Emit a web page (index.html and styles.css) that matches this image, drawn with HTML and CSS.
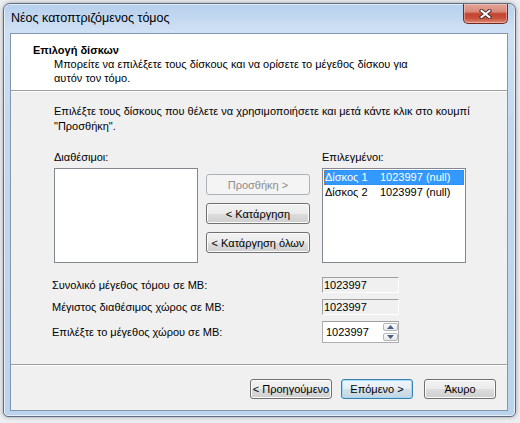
FILE: index.html
```html
<!DOCTYPE html>
<html lang="el">
<head>
<meta charset="utf-8">
<title>Νέος κατοπτριζόμενος τόμος</title>
<link rel="stylesheet" href="styles.css">
</head>
<body>
<div class="window">
  <div class="titlebar">
    <span class="title">Νέος κατοπτριζόμενος τόμος</span>
    <div class="close">
      <svg width="13" height="10" viewBox="0 0 13 10">
        <path d="M2.5 1.8 L10.5 8.2 M10.5 1.8 L2.5 8.2" stroke="#4b3030" stroke-width="3.8" stroke-linecap="square" fill="none"/>
        <path d="M2.5 1.8 L10.5 8.2 M10.5 1.8 L2.5 8.2" stroke="#ffffff" stroke-width="2" stroke-linecap="square" fill="none"/>
      </svg>
    </div>
  </div>
  <div class="client">
    <div class="header">
      <div class="h-title">Επιλογή δίσκων</div>
      <div class="h-sub">Μπορείτε να επιλέξετε τους δίσκους και να ορίσετε το μέγεθος δίσκου για<br>αυτόν τον τόμο.</div>
    </div>
    <div class="body">
      <p class="intro">Επιλέξτε τους δίσκους που θέλετε να χρησιμοποιήσετε και μετά κάντε κλικ στο κουμπί<br>"Προσθήκη".</p>
      <div class="picker">
        <div class="col">
          <div class="lbl">Διαθέσιμοι:</div>
          <div class="listbox"></div>
        </div>
        <div class="mid">
          <button class="btn" disabled>Προσθήκη &gt;</button>
          <button class="btn">&lt; Κατάργηση</button>
          <button class="btn">&lt; Κατάργηση όλων</button>
        </div>
        <div class="col">
          <div class="lbl">Επιλεγμένοι:</div>
          <div class="listbox">
            <div class="item sel"><span class="name">Δίσκος 1</span>1023997 (null)</div>
            <div class="item"><span class="name">Δίσκος 2</span>1023997 (null)</div>
          </div>
        </div>
      </div>
      <div class="fields">
        <span class="flbl">Συνολικό μέγεθος τόμου σε MB:</span>
        <div class="ro">1023997</div>
        <span class="flbl">Μέγιστος διαθέσιμος χώρος σε MB:</span>
        <div class="ro">1023997</div>
        <span class="flbl">Επιλέξτε το μέγεθος χώρου σε MB:</span>
        <div class="spin">
          <span class="spin-val">1023997</span>
          <div class="arrows">
            <div class="arr"><svg width="7" height="4" viewBox="0 0 7 4"><polygon points="0,4 3.5,0 7,4" fill="#4c5f86"/></svg></div>
            <div class="arr"><svg width="7" height="4" viewBox="0 0 7 4"><polygon points="0,0 3.5,4 7,0" fill="#4c5f86"/></svg></div>
          </div>
        </div>
      </div>
    </div>
    <div class="footer">
      <button class="btn b-prev">&lt; Προηγούμενο</button>
      <button class="btn b-next default">Επόμενο &gt;</button>
      <button class="btn b-cancel">Άκυρο</button>
    </div>
  </div>
</div>
</body>
</html>
```

FILE: styles.css
```css
* { box-sizing: border-box; }
html, body { margin: 0; padding: 0; }
body {
  width: 520px;
  height: 423px;
  overflow: hidden;
  background: #eceef1;
  font: 11px "Liberation Sans", Arial, sans-serif;
  color: #000;
}
.window {
  margin: 3px 0 0 3px;
  width: 513px;
  height: 414px;
  border: 1px solid #5d6d80;
  border-radius: 7px 7px 5px 5px;
  background: linear-gradient(to bottom, #b6cfec 0px, #cfe0f4 26px, #c3d8f0 120px, #bcd3ed 100%);
  box-shadow: inset 0 0 0 1px rgba(255,255,255,0.6), 0 0 4px rgba(0,0,0,0.35);
  display: flex;
  flex-direction: column;
}
.titlebar {
  height: 29px;
  flex: none;
  display: flex;
  justify-content: space-between;
  align-items: flex-start;
  padding-left: 7px;
}
.title {
  line-height: 29px;
  font-size: 12.5px;
  font-family: "Liberation Sans", Arial, sans-serif;
  color: #000;
}
.close {
  margin-right: 7px;
  width: 45px;
  height: 20px;
  border: 1px solid #6c2a22;
  border-top: none;
  border-radius: 0 0 5px 5px;
  background: linear-gradient(to bottom, #e3a597 0%, #d88a7b 40%, #c4432f 52%, #c9503b 75%, #dc8c78 100%);
  box-shadow: inset 0 0 0 1px rgba(255,220,210,0.45);
  display: flex;
  align-items: center;
  justify-content: center;
}
.client {
  flex: 1;
  margin: 0 7px 5px 6px;
  border: 1px solid #8496ac;
  background: #f0f0f0;
  display: flex;
  flex-direction: column;
}
.header {
  height: 57px;
  flex: none;
  background: #fff;
  border-bottom: 1px solid #a0a0a0;
  box-shadow: 0 1px 0 #fff;
  padding-top: 10px;
}
.h-title {
  font-weight: bold;
  line-height: 13px;
  padding-left: 22px;
}
.h-sub {
  line-height: 14px;
  padding-left: 43px;
}
.body {
  flex: 1;
  padding: 13px 0 0 43px;
}
.intro {
  margin: 0;
  line-height: 15px;
}
.picker {
  margin-top: 17px;
  display: flex;
  align-items: flex-start;
}
.col { width: 144px; }
.lbl { line-height: 13px; }
.listbox {
  margin-top: 4px;
  height: 95px;
  background: #fff;
  border: 1px solid #828790;
  padding: 1px;
}
.item {
  height: 15px;
  line-height: 15px;
  padding-left: 1px;
  white-space: nowrap;
}
.item .name {
  display: inline-block;
  width: 55px;
}
.item.sel {
  background: #3399ff;
  color: #fff;
  outline: 1px dotted #b56a2c;
  outline-offset: -1px;
}
.mid {
  width: 104px;
  margin: 23px 12px 0 8px;
  display: flex;
  flex-direction: column;
  gap: 8px;
}
.btn {
  font: 11px "Liberation Sans", Arial, sans-serif;
  color: #000;
  height: 21px;
  padding: 0;
  border: 1px solid #707070;
  border-radius: 3px;
  background: linear-gradient(to bottom, #f2f2f2 0%, #ebebeb 50%, #dddddd 51%, #cfcfcf 100%);
  box-shadow: inset 0 0 0 1px #fbfbfb;
  white-space: nowrap;
  overflow: hidden;
}
.btn:disabled {
  color: #8d8d8d;
  border-color: #adb2b5;
  background: #f4f4f4;
  box-shadow: none;
}
.fields {
  margin: 14px 0 0 -2px;
  display: grid;
  grid-template-columns: 270px 77px;
  grid-template-rows: 16px 16px 22px;
  row-gap: 6px;
  align-items: center;
}
.flbl { line-height: 13px; }
.ro {
  height: 16px;
  line-height: 14px;
  padding-left: 1px;
  background: #f0f0f0;
  border-top: 1px solid #a0a0a0;
  border-left: 1px solid #a0a0a0;
  border-right: 1px solid #fff;
  border-bottom: 1px solid #fff;
}
.spin {
  height: 22px;
  background: #fff;
  border: 1px solid #abadb3;
  border-top-color: #a0a0a0;
  display: flex;
  justify-content: space-between;
  align-items: center;
  padding-left: 3px;
}
.spin-val { line-height: 14px; }
.arrows {
  display: flex;
  flex-direction: column;
  gap: 2px;
  align-self: stretch;
  justify-content: center;
}
.arr {
  width: 15px;
  height: 8px;
  border: 1px solid #b5b8bd;
  border-radius: 2px;
  background: linear-gradient(to bottom, #fbfbfb, #e6e6e6);
  display: flex;
  align-items: center;
  justify-content: center;
}
.footer {
  flex: none;
  height: 46px;
  border-top: 1px solid #a0a0a0;
  box-shadow: inset 0 1px 0 #fff;
  padding: 14px 11px 0 0;
  display: flex;
  justify-content: flex-end;
  align-items: flex-start;
}
.footer .btn { height: 20px; }
.b-prev { width: 82px; }
.b-next { width: 72px; margin-left: 9px; }
.b-cancel { width: 72px; margin-left: 11px; }
.btn.default {
  border-color: #3c7fb1;
  box-shadow: inset 0 0 0 1px #9fdcf7;
  background: linear-gradient(to bottom, #eef6fb 0%, #e4eef5 50%, #d2e0ea 51%, #c6d6e2 100%);
}
```
